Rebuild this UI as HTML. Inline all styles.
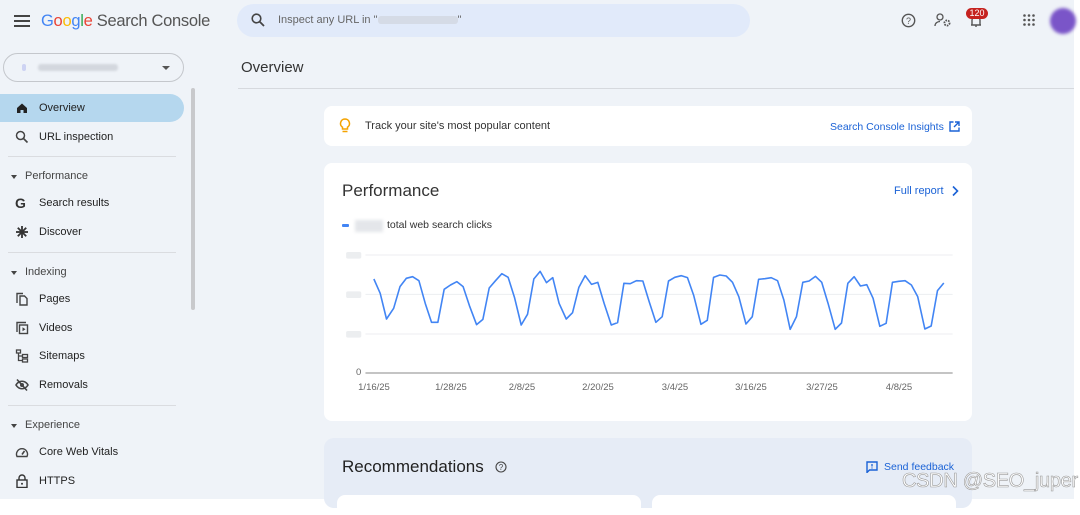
<!DOCTYPE html>
<html><head><meta charset="utf-8"><style>
*{margin:0;padding:0;box-sizing:border-box}
body{width:1080px;height:499px;overflow:hidden;background:#fff;font-family:"Liberation Sans",Arial,sans-serif;color:#1f1f1f;position:relative}
.bg{position:absolute;left:0;top:0;width:1074px;height:499px;background:#eff3f8}
.a{position:absolute}
.nav{position:absolute;left:0;height:28px;width:184px;font-size:11px;color:#1f1f1f;display:flex;align-items:center;padding-left:39px}
.nav svg{position:absolute;left:15px;top:7px}
.sec{position:absolute;left:0;font-size:11px;color:#444;padding-left:25px}
.sec:before{content:"";position:absolute;left:11px;top:5px;border:3px solid transparent;border-top:4px solid #444}
.hr{position:absolute;left:8px;width:168px;height:1px;background:#dadce0}
.card{position:absolute;background:#fff;border-radius:8px}
.blue{color:#1a62d6}
.xl{position:absolute;top:382px;font-size:9.5px;color:#666;transform:translateX(-50%)}
</style></head><body>
<div class="bg"></div>
<svg class="a" style="left:14px;top:14px" width="16" height="14"><rect y="1" width="16" height="2" fill="#444"/><rect y="6" width="16" height="2" fill="#444"/><rect y="11" width="16" height="2" fill="#444"/></svg>
<div class="a" style="left:41px;top:12px;font-size:16.5px;letter-spacing:-.3px"><span style="color:#4285f4">G</span><span style="color:#ea4335">o</span><span style="color:#fbbc05">o</span><span style="color:#4285f4">g</span><span style="color:#34a853">l</span><span style="color:#ea4335">e</span> <span style="color:#555">Search Console</span></div>
<div class="a" style="left:237px;top:4px;width:513px;height:33px;border-radius:17px;background:#e1eafa"></div>
<svg class="a" style="left:251px;top:13px" width="14" height="14"><circle cx="5.5" cy="5.5" r="4.3" fill="none" stroke="#444" stroke-width="1.6"/><line x1="8.5" y1="8.5" x2="13" y2="13" stroke="#444" stroke-width="1.8"/></svg>
<div class="a" style="left:278px;top:14px;font-size:11px;color:#666">Inspect any URL in "<span style="display:inline-block;width:80px;height:8px;background:#d5dbe6;vertical-align:middle;border-radius:3px"></span>"</div>
<svg class="a" style="left:901px;top:13px" width="15" height="15"><circle cx="7.5" cy="7.5" r="6.2" fill="none" stroke="#555" stroke-width="1.4"/><text x="7.5" y="11" font-size="9" text-anchor="middle" fill="#555" font-family="Liberation Sans">?</text></svg>
<svg class="a" style="left:934px;top:13px" width="18" height="15"><circle cx="6" cy="4" r="3" fill="none" stroke="#555" stroke-width="1.3"/><path d="M1 13c0-3 2.5-4.5 5-4.5" fill="none" stroke="#555" stroke-width="1.3"/><circle cx="13" cy="10" r="2.6" fill="none" stroke="#555" stroke-width="1.8" stroke-dasharray="1.6 1"/></svg>
<svg class="a" style="left:969px;top:14px" width="14" height="14"><path d="M2 11h10M3 11V6a4 4 0 0 1 8 0v5M7 11v2" fill="none" stroke="#555" stroke-width="1.4"/></svg>
<div class="a" style="left:966px;top:8px;width:22px;height:11px;border-radius:6px;background:#c5221f;color:#fff;font-size:9px;text-align:center;line-height:11px">120</div>
<svg class="a" style="left:1023px;top:14px" width="12" height="12"><g fill="#555"><circle cx="1.5" cy="1.5" r="1.3"/><circle cx="6" cy="1.5" r="1.3"/><circle cx="10.5" cy="1.5" r="1.3"/><circle cx="1.5" cy="6" r="1.3"/><circle cx="6" cy="6" r="1.3"/><circle cx="10.5" cy="6" r="1.3"/><circle cx="1.5" cy="10.5" r="1.3"/><circle cx="6" cy="10.5" r="1.3"/><circle cx="10.5" cy="10.5" r="1.3"/></g></svg>
<div class="a" style="left:1050px;top:8px;width:26px;height:26px;border-radius:50%;background:#7a55c8;filter:blur(1.5px)"></div>
<div class="a" style="left:3px;top:53px;width:181px;height:29px;border:1px solid #c4c7cc;border-radius:15px"></div>
<div class="a" style="left:22px;top:64px;width:4px;height:7px;background:#cdd3f3;border-radius:2px"></div>
<div class="a" style="left:38px;top:64px;width:80px;height:7px;background:#d3d7de;border-radius:3px;filter:blur(1px)"></div>
<div class="a" style="left:162px;top:66px;border:4px solid transparent;border-top:4px solid #555"></div>
<div class="a" style="left:191px;top:88px;width:4px;height:222px;background:#c8c9cc;border-radius:2px"></div>
<div class="a" style="left:0;top:94px;width:184px;height:28px;background:#b5d7ee;border-radius:0 14px 14px 0"></div>
<div class="nav" style="top:94px"><svg width="14" height="14"><path d="M2 7L7 2.5 12 7V12H8.5V9h-3v3H2z" fill="#222"/></svg>Overview</div>
<div class="nav" style="top:123px"><svg width="14" height="14"><circle cx="5.5" cy="5.5" r="4" fill="none" stroke="#444" stroke-width="1.5"/><line x1="8.5" y1="8.5" x2="12.5" y2="12.5" stroke="#444" stroke-width="1.6"/></svg>URL inspection</div>
<div class="hr" style="top:156px"></div>
<div class="sec" style="top:170px">Performance</div>
<div class="nav" style="top:189px"><svg width="14" height="14"><text x="0" y="12" font-size="14" font-weight="bold" fill="#333" font-family="Liberation Sans">G</text></svg>Search results</div>
<div class="nav" style="top:218px"><svg width="14" height="14"><g stroke="#333" stroke-width="1.8"><line x1="7" y1="1" x2="7" y2="13"/><line x1="1" y1="7" x2="13" y2="7"/><line x1="2.8" y1="2.8" x2="11.2" y2="11.2"/><line x1="11.2" y1="2.8" x2="2.8" y2="11.2"/></g></svg>Discover</div>
<div class="hr" style="top:252px"></div>
<div class="sec" style="top:266px">Indexing</div>
<div class="nav" style="top:285px"><svg width="14" height="14"><path d="M2 11V1.5h6M5 4h4.5l2.5 2.5V13H5z" fill="none" stroke="#444" stroke-width="1.4"/></svg>Pages</div>
<div class="nav" style="top:314px"><svg width="14" height="14"><path d="M2 11V1.5h9" fill="none" stroke="#444" stroke-width="1.4"/><rect x="4.5" y="4" width="8" height="8.5" fill="none" stroke="#444" stroke-width="1.4"/><path d="M7.5 6.3v4l3-2z" fill="#444"/></svg>Videos</div>
<div class="nav" style="top:342px"><svg width="14" height="14"><g fill="none" stroke="#444" stroke-width="1.3"><rect x="1.5" y="1" width="4" height="3"/><rect x="7.5" y="5.5" width="5" height="3"/><rect x="7.5" y="10" width="5" height="3"/><path d="M3.5 4v7.5h4M3.5 7h4"/></g></svg>Sitemaps</div>
<div class="nav" style="top:371px"><svg width="14" height="14"><path d="M1 7c3-5 9-5 12 0-3 5-9 5-12 0z" fill="none" stroke="#444" stroke-width="1.6"/><circle cx="7" cy="7" r="2" fill="#444"/><line x1="2" y1="1.5" x2="12" y2="12.5" stroke="#444" stroke-width="1.6"/></svg>Removals</div>
<div class="hr" style="top:405px"></div>
<div class="sec" style="top:419px">Experience</div>
<div class="nav" style="top:438px"><svg width="14" height="14"><path d="M2 11.5a5.5 5.5 0 1 1 10 0z" fill="none" stroke="#444" stroke-width="1.4"/><line x1="7" y1="9.5" x2="9.5" y2="6" stroke="#444" stroke-width="1.6"/></svg>Core Web Vitals</div>
<div class="nav" style="top:467px"><svg width="14" height="14"><rect x="2" y="6" width="10" height="7.5" fill="none" stroke="#333" stroke-width="1.4"/><path d="M4 6V4a3 3 0 0 1 6 0v2" fill="none" stroke="#333" stroke-width="1.4"/><circle cx="7" cy="9.8" r="1" fill="#333"/></svg>HTTPS</div>
<div class="a" style="left:241px;top:59px;font-size:15px;color:#333">Overview</div>
<div class="a" style="left:238px;top:88px;width:836px;height:1px;background:#d6d9de"></div>
<div class="card" style="left:324px;top:106px;width:648px;height:40px"></div>
<svg class="a" style="left:339px;top:118px" width="12" height="16"><path d="M6 1a4.5 4.5 0 0 0-2.5 8.2V11h5V9.2A4.5 4.5 0 0 0 6 1z" fill="none" stroke="#f4a300" stroke-width="1.5"/><line x1="3.5" y1="13.5" x2="8.5" y2="13.5" stroke="#f4a300" stroke-width="1.5"/></svg>
<div class="a" style="left:365px;top:120px;font-size:11px;color:#333">Track your site's most popular content</div>
<div class="a blue" style="left:830px;top:121px;font-size:10.5px">Search Console Insights</div>
<svg class="a" style="left:949px;top:121px" width="11" height="11"><path d="M4.5 1H1v9h9V6.5" fill="none" stroke="#1a62d6" stroke-width="1.4"/><path d="M6 1h4v4M10 1L5 6" fill="none" stroke="#1a62d6" stroke-width="1.4"/></svg>
<div class="card" style="left:324px;top:163px;width:648px;height:258px"></div>
<div class="a" style="left:342px;top:181px;font-size:17px;color:#333">Performance</div>
<div class="a blue" style="left:894px;top:185px;font-size:11px">Full report</div>
<svg class="a" style="left:951px;top:185px" width="8" height="12"><path d="M2 1.5l4.5 4.5L2 10.5" fill="none" stroke="#1a62d6" stroke-width="1.6"/></svg>
<div class="a" style="left:342px;top:224px;width:7px;height:3px;background:#4285f4;border-radius:1px"></div>
<div class="a" style="left:355px;top:220px;width:28px;height:12px;background:#e4e6ea;filter:blur(1.5px)"></div>
<div class="a" style="left:387px;top:219px;font-size:10.5px;color:#333">total web search clicks</div>
<svg class="a" style="left:320px;top:160px" width="660" height="270" viewBox="0 0 1568 810" preserveAspectRatio="none">
<g stroke="#eceef1" stroke-width="1" vector-effect="non-scaling-stroke"><line x1="108" y1="285" x2="1503" y2="285" vector-effect="non-scaling-stroke"/><line x1="108" y1="403" x2="1503" y2="403" vector-effect="non-scaling-stroke"/><line x1="108" y1="522" x2="1503" y2="522" vector-effect="non-scaling-stroke"/></g>
<g fill="#eceef0"><rect x="62" y="276" width="36" height="20" rx="5"/><rect x="62" y="394" width="36" height="20" rx="5"/><rect x="62" y="513" width="36" height="20" rx="5"/></g>
<line x1="108" y1="639" x2="1503" y2="639" stroke="#888" stroke-width="1" vector-effect="non-scaling-stroke"/>
<polyline fill="none" stroke="#4285f4" stroke-width="1.6" vector-effect="non-scaling-stroke" stroke-linejoin="round" points="128,357 143,400 158,477 175,445 190,380 205,355 220,350 235,362 250,430 265,487 280,487 295,388 310,375 325,365 340,380 355,437 372,494 387,478 402,384 417,362 432,341 447,352 462,412 478,495 493,463 508,357 523,334 538,368 553,353 568,430 585,477 600,458 615,382 630,347 645,373 660,367 675,430 692,495 707,488 722,370 737,371 752,362 767,363 782,425 798,487 813,470 828,363 843,352 858,347 873,353 888,407 905,493 920,481 935,352 950,345 965,348 980,367 995,410 1012,492 1027,470 1042,358 1057,356 1072,353 1087,362 1102,420 1117,508 1132,470 1147,367 1162,363 1177,349 1192,367 1207,430 1224,508 1239,489 1254,370 1269,350 1284,378 1299,374 1314,415 1330,499 1345,490 1360,367 1375,364 1390,362 1405,375 1420,410 1437,507 1452,498 1467,392 1482,369"/>
</svg>
<div class="a" style="left:356px;top:367px;font-size:9.5px;color:#666">0</div>
<div class="xl" style="left:374px">1/16/25</div>
<div class="xl" style="left:451px">1/28/25</div>
<div class="xl" style="left:522px">2/8/25</div>
<div class="xl" style="left:598px">2/20/25</div>
<div class="xl" style="left:675px">3/4/25</div>
<div class="xl" style="left:751px">3/16/25</div>
<div class="xl" style="left:822px">3/27/25</div>
<div class="xl" style="left:899px">4/8/25</div>
<div class="a" style="left:324px;top:438px;width:648px;height:70px;background:#e6ecf6;border-radius:10px"></div>
<div class="a" style="left:342px;top:457px;font-size:17px;color:#222">Recommendations</div>
<svg class="a" style="left:495px;top:461px" width="12" height="12"><circle cx="6" cy="6" r="5" fill="none" stroke="#444" stroke-width="1.1"/><text x="6" y="9" font-size="8" text-anchor="middle" fill="#444" font-family="Liberation Sans">?</text></svg>
<svg class="a" style="left:866px;top:461px" width="12" height="12"><path d="M1 1h10v8H3.5L1 11.5z" fill="none" stroke="#1a62d6" stroke-width="1.4"/><line x1="6" y1="3" x2="6" y2="5.5" stroke="#1a62d6" stroke-width="1.3"/><line x1="6" y1="6.5" x2="6" y2="7.5" stroke="#1a62d6" stroke-width="1.3"/></svg>
<div class="a blue" style="left:884px;top:461px;font-size:10.5px">Send feedback</div>
<div class="card" style="left:337px;top:495px;width:304px;height:20px"></div>
<div class="card" style="left:652px;top:495px;width:304px;height:20px"></div>
<div class="a" style="left:902px;top:470px;font-size:20px;color:#fff;-webkit-text-stroke:0.6px #9a9a9a;letter-spacing:-.3px">CSDN @SEO_juper</div>
</body></html>
